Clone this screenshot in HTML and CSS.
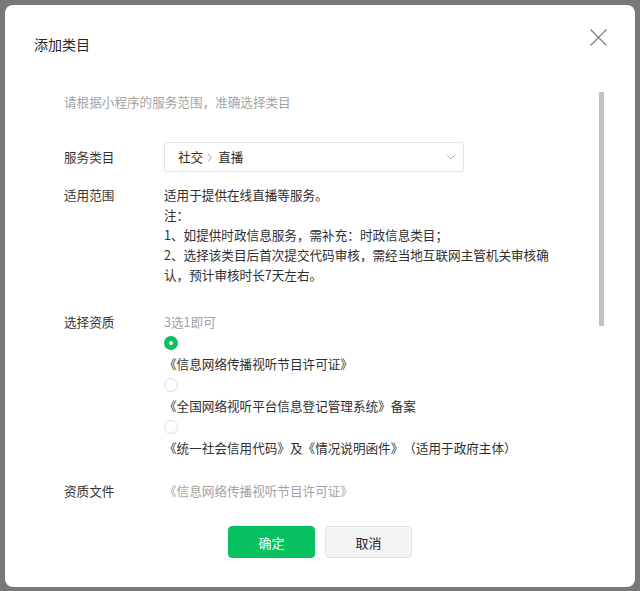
FILE: index.html
```html
<!DOCTYPE html>
<html lang="zh-CN">
<head>
<meta charset="utf-8">
<title>添加类目</title>
<link rel="stylesheet" href="styles.css">
</head>
<body>
<div class="dialog">
  <div class="dialog-header">
    <div class="dialog-title">添加类目</div>
    <button class="close" aria-label="关闭">
      <svg width="17" height="17" viewBox="0 0 17 17"><path d="M0.5 0.5 L16.5 16.5 M16.5 0.5 L0.5 16.5" stroke="#808080" stroke-width="1.3" fill="none"/></svg>
    </button>
  </div>
  <div class="dialog-body">
    <div class="tip">请根据小程序的服务范围，准确选择类目</div>
    <div class="row row-select">
      <div class="label">服务类目</div>
      <div class="select">
        <span class="crumb">社交</span>
        <svg class="sep" width="6" height="9" viewBox="0 0 6 9"><path d="M1 0.8 L4.8 4.5 L1 8.2" stroke="#a8a8a8" stroke-width="1" fill="none"/></svg>
        <span class="crumb">直播</span>
        <svg class="arrow" width="10" height="6" viewBox="0 0 10 6"><path d="M0.8 0.8 L5 5 L9.2 0.8" stroke="#b5b5b5" stroke-width="1" fill="none"/></svg>
      </div>
    </div>
    <div class="row row-scope">
      <div class="label">适用范围</div>
      <div class="value scope">适用于提供在线直播等服务。<br>注：<br>1、如提供时政信息服务，需补充：时政信息类目；<br>2、选择该类目后首次提交代码审核，需经当地互联网主管机关审核确认，预计审核时长7天左右。</div>
    </div>
    <div class="row row-qual">
      <div class="label">选择资质</div>
      <div class="value qual">
        <div class="hint">3选1即可</div>
        <div class="radio-line"><span class="radio checked"></span></div>
        <div class="opt">《信息网络传播视听节目许可证》</div>
        <div class="radio-line"><span class="radio"></span></div>
        <div class="opt">《全国网络视听平台信息登记管理系统》备案</div>
        <div class="radio-line"><span class="radio"></span></div>
        <div class="opt">《统一社会信用代码》及《情况说明函件》（适用于政府主体）</div>
      </div>
    </div>
    <div class="row row-file">
      <div class="label">资质文件</div>
      <div class="value file">《信息网络传播视听节目许可证》</div>
    </div>
    <div class="scrollbar"></div>
  </div>
  <div class="dialog-footer">
    <button class="btn btn-primary">确定</button>
    <button class="btn btn-default">取消</button>
  </div>
</div>
</body>
</html>
```
FILE: styles.css
```css
html, body {
  margin: 0;
  padding: 0;
}
body {
  width: 640px;
  height: 591px;
  overflow: hidden;
  background: #787878;
  font-family: "Noto Sans CJK SC", "Noto Sans", sans-serif;
  color: #353535;
  text-spacing-trim: space-all;
}
.dialog {
  position: relative;
  margin: 5px;
  width: 630px;
  height: 582px;
  background: #fff;
  border-radius: 8px;
  display: flex;
  flex-direction: column;
  box-sizing: border-box;
}
.dialog-header {
  position: relative;
  height: 75px;
  padding: 29px 29px 0 29px;
  box-sizing: border-box;
}
.dialog-title {
  font-size: 14px;
  line-height: 20px;
  color: #262626;
}
.close {
  position: absolute;
  right: 28px;
  top: 24px;
  width: 17px;
  height: 17px;
  padding: 0;
  border: 0;
  background: none;
  display: block;
}
.close svg { display: block; }
.dialog-body {
  position: relative;
  height: 426px;
  overflow: hidden;
  padding: 12px 59px 0 59px;
  box-sizing: border-box;
  font-size: 12.6px;
  line-height: 20px;
}
.tip {
  color: #a3a3a3;
  margin-bottom: 30px;
}
.row {
  display: grid;
  grid-template-columns: 100px 392px;
}
.label {
  color: #353535;
}
.row-select {
  align-items: center;
  margin-bottom: 13px;
}
.select {
  height: 30px;
  width: 300px;
  box-sizing: border-box;
  border: 1px solid #e4e4e4;
  border-radius: 2px;
  display: flex;
  align-items: center;
  padding-left: 13px;
  color: #2b2b2b;
}
.sep {
  margin: 0 5px 0 4px;
}
.arrow {
  margin-left: auto;
  margin-right: 7px;
}
.row-scope {
  margin-bottom: 26px;
}
.scope {
  color: #2f2f2f;
}
.row-qual {
  line-height: 21px;
  margin-bottom: 23px;
}
.hint {
  color: #a3a3a3;
}
.radio-line {
  height: 21px;
  display: flex;
  align-items: center;
}
.radio {
  width: 14px;
  height: 14px;
  box-sizing: border-box;
  border-radius: 50%;
  border: 1px solid #dcdcdc;
  background: #fff;
  position: relative;
}
.radio.checked {
  border: 0;
  background: #07c160;
}
.radio.checked::after {
  content: "";
  position: absolute;
  left: 5px;
  top: 5px;
  width: 4px;
  height: 4px;
  border-radius: 50%;
  background: #fff;
}
.opt {
  color: #2f2f2f;
  white-space: nowrap;
}
.file {
  color: #a3a3a3;
}
.scrollbar {
  position: absolute;
  left: 594px;
  top: 12px;
  width: 5px;
  height: 234px;
  background: #c2c2c2;
}
.dialog-footer {
  display: flex;
  justify-content: center;
  gap: 10px;
  padding: 20px 0 29px;
}
.btn {
  width: 87px;
  height: 32px;
  border-radius: 4px;
  font-family: "Noto Sans CJK SC", "Noto Sans", sans-serif;
  font-size: 13px;
  padding: 0;
  box-sizing: border-box;
}
.btn-primary {
  background: #07c160;
  border: 1px solid #07c160;
  color: #fff;
}
.btn-default {
  background: #f4f5f7;
  border: 1px solid #e2e3e5;
  color: #1f1f1f;
}
```
